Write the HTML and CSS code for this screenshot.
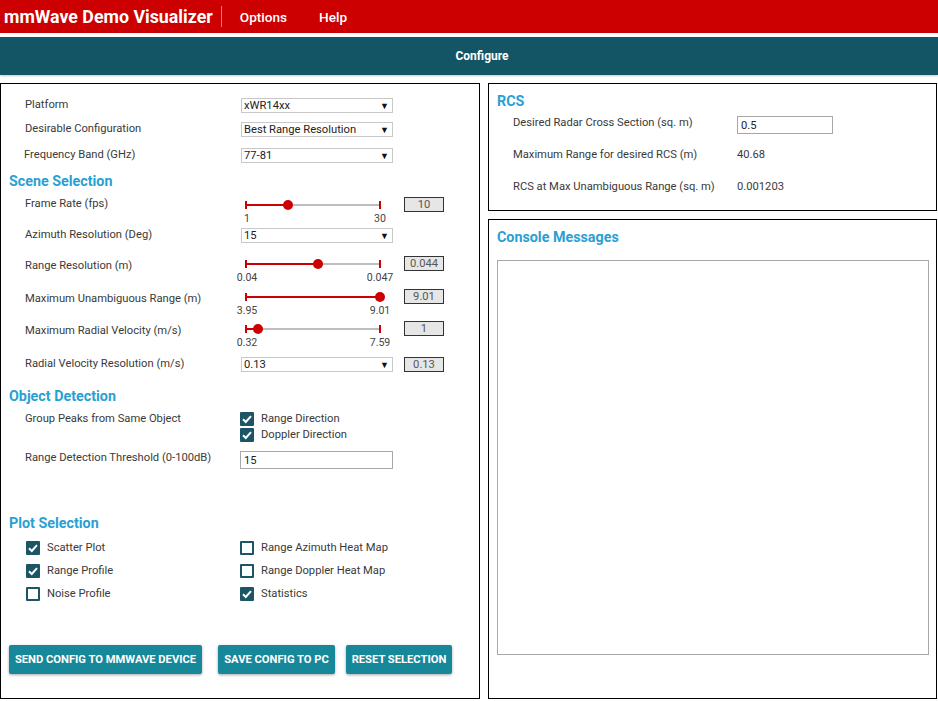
FILE: index.html
```html
<!DOCTYPE html>
<html lang="en">
<head>
<meta charset="utf-8">
<title>mmWave Demo Visualizer</title>
<link rel="stylesheet" href="styles.css">
</head>
<body>
<header class="topbar">
  <span class="app-title">mmWave Demo Visualizer</span>
  <span class="divider"></span>
  <nav class="menu"><span>Options</span><span>Help</span></nav>
</header>
<div class="tabbar"><span class="tab">Configure</span></div>

<main class="content">
  <section class="panel config">
    <div class="row h24">
      <span class="lbl">Platform</span>
      <div class="select"><span>xWR14xx</span><span class="caret">▼</span></div>
    </div>
    <div class="row h26">
      <span class="lbl">Desirable Configuration</span>
      <div class="select"><span>Best Range Resolution</span><span class="caret">▼</span></div>
    </div>
    <div class="row h24">
      <span class="lbl lbl-shift">Frequency Band (GHz)</span>
      <div class="select"><span>77-81</span><span class="caret">▼</span></div>
    </div>

    <h2 class="sec-title in-config h25">Scene Selection</h2>

    <div class="row h31">
      <span class="lbl">Frame Rate (fps)</span>
      <div class="slider">
        <div class="track"><div class="fill" style="width:31%"></div><span class="tick tick-l"></span><span class="tick tick-r"></span><span class="thumb" style="left:31%"></span></div>
        <span class="scale scale-l">1</span><span class="scale scale-r">30</span>
      </div>
      <span class="val">10</span>
    </div>
    <div class="row h28">
      <span class="lbl">Azimuth Resolution (Deg)</span>
      <div class="select"><span>15</span><span class="caret">▼</span></div>
    </div>
    <div class="row h33">
      <span class="lbl lbl-slider">Range Resolution (m)</span>
      <div class="slider">
        <div class="track"><div class="fill" style="width:54%"></div><span class="tick tick-l"></span><span class="tick tick-r"></span><span class="thumb" style="left:54%"></span></div>
        <span class="scale scale-l">0.04</span><span class="scale scale-r">0.047</span>
      </div>
      <span class="val">0.044</span>
    </div>
    <div class="row h32">
      <span class="lbl lbl-slider">Maximum Unambiguous Range (m)</span>
      <div class="slider">
        <div class="track"><div class="fill" style="width:100%"></div><span class="tick tick-l"></span><span class="tick tick-r"></span><span class="thumb" style="left:100%"></span></div>
        <span class="scale scale-l">3.95</span><span class="scale scale-r">9.01</span>
      </div>
      <span class="val">9.01</span>
    </div>
    <div class="row h36">
      <span class="lbl lbl-slider">Maximum Radial Velocity (m/s)</span>
      <div class="slider">
        <div class="track"><div class="fill" style="width:9%"></div><span class="tick tick-l"></span><span class="tick tick-r"></span><span class="thumb" style="left:9%"></span></div>
        <span class="scale scale-l">0.32</span><span class="scale scale-r">7.59</span>
      </div>
      <span class="val">1</span>
    </div>
    <div class="row h30">
      <span class="lbl">Radial Velocity Resolution (m/s)</span>
      <div class="select"><span>0.13</span><span class="caret">▼</span></div>
      <span class="val">0.13</span>
    </div>

    <h2 class="sec-title in-config h25">Object Detection</h2>

    <div class="row h39">
      <span class="lbl">Group Peaks from Same Object</span>
      <div class="check-stack">
        <label class="check"><span class="cb on"><svg viewBox="0 0 14 14"><polyline points="3,7.2 5.8,10 11,4.2"/></svg></span>Range Direction</label>
        <label class="check"><span class="cb on"><svg viewBox="0 0 14 14"><polyline points="3,7.2 5.8,10 11,4.2"/></svg></span>Doppler Direction</label>
      </div>
    </div>
    <div class="row h63">
      <span class="lbl">Range Detection Threshold (0-100dB)</span>
      <div class="textbox wide">15</div>
    </div>

    <h2 class="sec-title in-config h27">Plot Selection</h2>

    <div class="plot-grid">
      <label class="check"><span class="cb on"><svg viewBox="0 0 14 14"><polyline points="3,7.2 5.8,10 11,4.2"/></svg></span>Scatter Plot</label>
      <label class="check"><span class="cb"></span>Range Azimuth Heat Map</label>
      <label class="check"><span class="cb on"><svg viewBox="0 0 14 14"><polyline points="3,7.2 5.8,10 11,4.2"/></svg></span>Range Profile</label>
      <label class="check"><span class="cb"></span>Range Doppler Heat Map</label>
      <label class="check"><span class="cb"></span>Noise Profile</label>
      <label class="check"><span class="cb on"><svg viewBox="0 0 14 14"><polyline points="3,7.2 5.8,10 11,4.2"/></svg></span>Statistics</label>
    </div>

    <div class="btn-row">
      <button class="btn btn-send">SEND CONFIG TO MMWAVE DEVICE</button>
      <button class="btn btn-save">SAVE CONFIG TO PC</button>
      <button class="btn btn-reset">RESET SELECTION</button>
    </div>
  </section>

  <div class="side">
    <section class="panel rcs">
      <h2 class="sec-title">RCS</h2>
      <div class="rcs-row first">
        <span class="lbl">Desired Radar Cross Section (sq. m)</span>
        <div class="textbox rcs-input">0.5</div>
      </div>
      <div class="rcs-row">
        <span class="lbl">Maximum Range for desired RCS (m)</span>
        <span class="lbl">40.68</span>
      </div>
      <div class="rcs-row">
        <span class="lbl">RCS at Max Unambiguous Range (sq. m)</span>
        <span class="lbl">0.001203</span>
      </div>
    </section>
    <section class="panel console">
      <h2 class="sec-title">Console Messages</h2>
      <div class="console-box"></div>
    </section>
  </div>
</main>
</body>
</html>
```

FILE: styles.css
```css
* { box-sizing: border-box; }

body {
  margin: 0;
  width: 938px;
  height: 701px;
  overflow: hidden;
  background: #fff;
  font-family: Roboto, "Liberation Sans", Arial, sans-serif;
  color: #333;
}

/* ---------- header ---------- */
.topbar {
  height: 33px;
  background: #cc0000;
  color: #fff;
  display: flex;
  align-items: center;
}
.app-title {
  font-size: 17.8px;
  font-weight: 700;
  padding-left: 4px;
}
.divider {
  width: 1px;
  height: 21px;
  background: #e57b7b;
  margin-left: 8px;
}
.menu {
  display: flex;
  gap: 32px;
  margin-left: 18px;
  font-size: 13.6px;
  font-weight: 500;
}

.tabbar {
  margin-top: 4px;
  height: 38px;
  background: #135565;
  display: flex;
  align-items: center;
  justify-content: center;
  box-shadow: 0 1px 2px rgba(0, 0, 0, 0.22);
}
.tab {
  color: #fff;
  font-size: 12px;
  font-weight: 700;
  padding-left: 26px;
}

/* ---------- layout ---------- */
.content {
  display: flex;
  gap: 8px;
  padding-top: 8px;
}
.panel {
  border: 1px solid #000;
}
.config {
  width: 480px;
  height: 616px;
  padding: 14px 0 0 24px;
}
.side {
  width: 449px;
  display: flex;
  flex-direction: column;
  gap: 8px;
}
.rcs {
  height: 128px;
  padding: 8px 8px 0 8px;
}
.console {
  height: 480px;
  padding: 8px 8px 0 8px;
}

/* ---------- common text ---------- */
.sec-title {
  margin: 0;
  font-size: 14.3px;
  font-weight: 700;
  line-height: 18px;
  color: #2a9fd3;
}
.sec-title.in-config { margin-left: -16px; }
.lbl {
  font-size: 11.2px;
  line-height: 14px;
  color: #3a3a3a;
}
.lbl-slider { padding-top: 3px; }
.lbl-shift { margin-left: -1px; }

/* ---------- form rows ---------- */
.row {
  display: grid;
  grid-template-columns: 216px 152px 11px 40px;
  align-items: start;
}
.h24 { height: 24px; }
.h25 { height: 25px; }
.h26 { height: 26px; }
.h27 { height: 27px; }
.h28 { height: 28px; }
.h30 { height: 30px; }
.h31 { height: 31px; }
.h32 { height: 32px; }
.h33 { height: 33px; }
.h36 { height: 36px; }
.h39 { height: 39px; }
.h63 { height: 63px; }

.select {
  grid-column: 2;
  height: 15px;
  border: 1px solid #c8c8c8;
  background: #fff;
  display: flex;
  align-items: center;
  justify-content: space-between;
  padding: 0 3px 0 2px;
  font-size: 11.2px;
  color: #222;
}
.caret {
  font-size: 9px;
  color: #111;
}

.val {
  grid-column: 4;
  height: 15px;
  border: 1px solid #333;
  background: #e6e6e6;
  font-size: 11.2px;
  line-height: 13px;
  text-align: center;
  color: #555;
}

/* slider widget */
.slider {
  grid-column: 2;
  position: relative;
  height: 30px;
}
.track {
  position: absolute;
  left: 5px;
  top: 7px;
  width: 134px;
  height: 2px;
  background: #bdbdbd;
}
.fill {
  height: 100%;
  background: #cc0000;
}
.tick {
  position: absolute;
  top: -3px;
  width: 2px;
  height: 8px;
  background: #cc0000;
}
.tick-l { left: -1px; }
.tick-r { right: -1px; }
.thumb {
  position: absolute;
  top: -4px;
  width: 10px;
  height: 10px;
  margin-left: -5px;
  border-radius: 50%;
  background: #cc0000;
}
.scale {
  position: absolute;
  top: 16px;
  font-size: 10.6px;
  line-height: 12px;
  color: #444;
  transform: translateX(-50%);
}
.scale-l { left: 6px; }
.scale-r { left: 139px; }

/* text inputs */
.textbox {
  height: 18px;
  border: 1px solid #a8a8a8;
  background: #fff;
  font-size: 11.2px;
  line-height: 16px;
  padding: 1px 0 0 3px;
  color: #222;
}
.textbox.wide {
  grid-column: 2 / 4;
  width: 153px;
  margin-left: -1px;
}

/* checkboxes */
.check-stack {
  grid-column: 2 / 5;
  margin-left: -1px;
  display: flex;
  flex-direction: column;
  gap: 2px;
}
.check {
  display: flex;
  align-items: center;
  gap: 7px;
  font-size: 11.2px;
  line-height: 14px;
  color: #3a3a3a;
}
.cb {
  flex: none;
  width: 14px;
  height: 14px;
  border: 2px solid #1c5566;
  border-radius: 1px;
  background: #fff;
  display: flex;
}
.cb.on { background: #1c5566; }
.cb svg {
  width: 14px;
  height: 14px;
  margin: -2px;
}
.cb polyline {
  fill: none;
  stroke: #fff;
  stroke-width: 2;
}

.plot-grid {
  display: grid;
  grid-template-columns: 214px 200px;
  grid-auto-rows: 23px;
  align-items: start;
  padding-left: 1px;
}

/* buttons */
.btn-row {
  display: flex;
  gap: 11px;
  margin: 35px 0 0 -16px;
}
.btn {
  height: 29px;
  border: 0;
  border-radius: 2px;
  background: #17889a;
  color: #fff;
  font-family: inherit;
  font-size: 11.2px;
  font-weight: 700;
  padding: 0;
  box-shadow: 0 1px 3px rgba(0, 0, 0, 0.35);
  white-space: nowrap;
}
.btn-send { width: 193px; margin-right: 5px; }
.btn-save { width: 117px; }
.btn-reset { width: 106px; }

/* RCS panel */
.rcs-row {
  display: grid;
  grid-template-columns: 224px 96px;
  padding-left: 16px;
  height: 32px;
  align-items: start;
}
.rcs-row.first { margin-top: 6px; }
.rcs-input { width: 96px; }

/* console */
.console-box {
  margin-top: 14px;
  width: 432px;
  height: 395px;
  border: 1px solid #a8a8a8;
}
```
